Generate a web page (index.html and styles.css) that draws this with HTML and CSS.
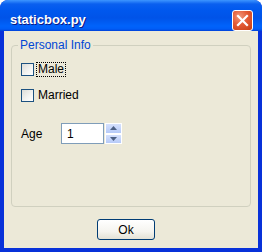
FILE: index.html
```html
<!DOCTYPE html>
<html lang="en">
<head>
    <meta charset="UTF-8">
    <title>staticbox.py</title>
    <link rel="stylesheet" href="styles.css">
</head>
<body>
    <div class="window">
        <div class="titlebar">
            <span class="title">staticbox.py</span>
            <span class="close-btn">
                <svg width="13" height="13" viewBox="0 0 13 13">
                    <path d="M2 2 L11 11 M11 2 L2 11" stroke="#fff" stroke-width="2.2" stroke-linecap="square"/>
                </svg>
            </span>
        </div>
        <div class="client">
            <fieldset class="staticbox">
                <legend>Personal Info</legend>
                <div class="row check-row">
                    <span class="checkbox"></span>
                    <span class="check-label focused">Male</span>
                </div>
                <div class="row check-row">
                    <span class="checkbox"></span>
                    <span class="check-label">Married</span>
                </div>
                <div class="row age-row">
                    <span class="age-label">Age</span>
                    <span class="textctrl">1</span>
                    <span class="spin">
                        <span class="spin-btn up">
                            <svg width="7" height="4" viewBox="0 0 7 4"><path d="M0 4 L3.5 0 L7 4 Z" fill="#4d6185"/></svg>
                        </span>
                        <span class="spin-btn down">
                            <svg width="7" height="4" viewBox="0 0 7 4"><path d="M0 0 L3.5 4 L7 0 Z" fill="#4d6185"/></svg>
                        </span>
                    </span>
                </div>
            </fieldset>
            <div class="buttons">
                <button class="ok-btn">Ok</button>
            </div>
        </div>
    </div>
</body>
</html>
```

FILE: styles.css
```css
body {
    margin: 0;
    background: #fff;
    font-family: "Liberation Sans", Arial, sans-serif;
}

.window {
    width: 262px;
    height: 252px;
    display: flex;
    flex-direction: column;
    background: #0831d9;
    border-radius: 8px 8px 0 0;
    overflow: hidden;
}

.titlebar {
    height: 31px;
    flex: none;
    display: flex;
    align-items: center;
    padding: 0 9px 0 10px;
    background: linear-gradient(#3d95ff 0, #0a5fef 4px, #0058ee 10px, #0053e8 18px, #0063fb 26px, #005df7 29px, #0040d8 31px);
}

.title {
    flex: 1;
    color: #fff;
    font-weight: bold;
    font-size: 13px;
    padding-top: 7px;
    text-shadow: 1px 1px #0a1883;
}

.close-btn {
    width: 21px;
    height: 21px;
    margin-top: 9px;
    box-sizing: border-box;
    border: 1px solid #fff;
    border-radius: 3px;
    background: radial-gradient(circle at 35% 30%, #f0977b 0, #e35a35 45%, #c63d12 100%);
    display: flex;
    align-items: center;
    justify-content: center;
}

.client {
    flex: 1;
    margin: 0 4px 4px 4px;
    background: #ece9d8;
    display: flex;
    flex-direction: column;
    padding: 7px 7px 8px 7px;
}

.staticbox {
    margin: 0;
    height: 169px;
    box-sizing: border-box;
    border: 1px solid #d0d0bf;
    border-radius: 4px;
    padding: 10px 9px 0 9px;
}

.staticbox legend {
    color: #0046d5;
    font-size: 12px;
    padding: 0 2px;
    margin-left: -3px;
}

.row {
    display: flex;
    align-items: center;
}

.check-row {
    height: 14px;
    margin-bottom: 12px;
}

.checkbox {
    width: 13px;
    height: 13px;
    box-sizing: border-box;
    border: 1px solid #1c5180;
    background: linear-gradient(135deg, #dcdcd7 0, #f4f4f2 60%, #fff 100%);
}

.check-label {
    font-size: 12px;
    color: #000;
    margin-left: 2px;
    padding: 0 1px;
    line-height: 13px;
    border: 1px solid transparent;
}

.check-label.focused {
    border: 1px dotted #000;
}

.age-row {
    margin-top: 21px;
    height: 21px;
}

.age-label {
    font-size: 12px;
    width: 40px;
}

.textctrl {
    width: 43px;
    height: 21px;
    box-sizing: border-box;
    border: 1px solid #7f9db9;
    background: #fff;
    font-size: 12px;
    padding: 3px 0 0 5px;
}

.spin {
    width: 17px;
    height: 21px;
    margin-left: 1px;
    display: flex;
    flex-direction: column;
}

.spin-btn {
    flex: 1;
    box-sizing: border-box;
    border: 1px solid #fff;
    background: linear-gradient(#d5e1fd, #b6caf8);
    display: flex;
    align-items: center;
    justify-content: center;
}

.buttons {
    flex: 1;
    display: flex;
    justify-content: flex-start;
    align-items: flex-end;
    padding-left: 86px;
}

.ok-btn {
    width: 58px;
    height: 21px;
    border: 1px solid #003c74;
    border-radius: 3px;
    background: linear-gradient(#fff 0, #f5f4ef 60%, #e3e1d6 100%);
    font-family: "Liberation Sans", Arial, sans-serif;
    font-size: 12px;
    color: #000;
    padding: 0;
}
```
